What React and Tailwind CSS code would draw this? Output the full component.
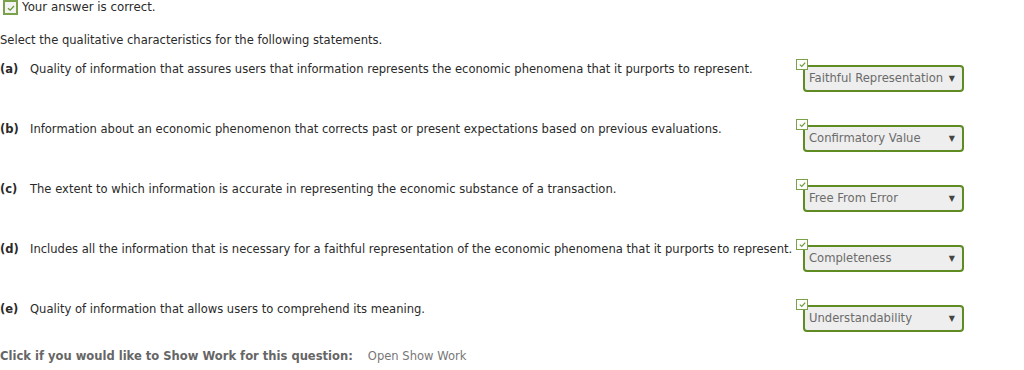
import React from "react";

const rows = [
  {
    label: "(a)",
    text: "Quality of information that assures users that information represents the economic phenomena that it purports to represent.",
    answer: "Faithful Representation",
  },
  {
    label: "(b)",
    text: "Information about an economic phenomenon that corrects past or present expectations based on previous evaluations.",
    answer: "Confirmatory Value",
  },
  {
    label: "(c)",
    text: "The extent to which information is accurate in representing the economic substance of a transaction.",
    answer: "Free From Error",
  },
  {
    label: "(d)",
    text: "Includes all the information that is necessary for a faithful representation of the economic phenomena that it purports to represent.",
    answer: "Completeness",
  },
  {
    label: "(e)",
    text: "Quality of information that allows users to comprehend its meaning.",
    answer: "Understandability",
  },
];

function Tick({ className }) {
  return (
    <svg viewBox="0 0 10 10" className={className}>
      <path d="M2 5.2 L4.2 7.2 L8 3" fill="none" stroke="#6a9a3a" strokeWidth="1.3" />
    </svg>
  );
}

function Dropdown({ value }) {
  return (
    <div className="relative w-[168px] h-[60px] shrink-0">
      <div className="absolute left-[1px] top-[3px] w-[12px] h-[11px] border border-[#7aa24a] bg-white flex items-center justify-center z-10">
        <Tick className="w-[9px] h-[9px]" />
      </div>
      <div className="mt-[9px] ml-[8px] w-[161px] h-[27px] border-2 border-[#5f8c22] rounded-[4px] bg-[#eeeeee] flex items-center justify-between pl-[4px] pr-[7px] pt-[1px] text-[11.6px] text-[#6b6b6b] whitespace-nowrap">
        <span>{value}</span>
        <span className="text-[8px] text-[#444]">▼</span>
      </div>
    </div>
  );
}

export default function App() {
  return (
    <div className="w-[1024px] h-[370px] bg-white text-[#2a2a2a] text-[11.56px] overflow-hidden" style={{ fontFamily: "'DejaVu Sans', Verdana, sans-serif" }}>
      <div className="flex items-center h-[15px] pl-[3px] gap-[4px]">
        <div className="w-[15px] h-[15px] border-2 border-[#7aa24a] bg-[#f4f4f4] flex items-center justify-center">
          <Tick className="w-[10px] h-[10px]" />
        </div>
        <span className="leading-[15px] text-[11.8px]">Your answer is correct.</span>
      </div>

      <p className="mt-[18px] leading-[14px]">Select the qualitative characteristics for the following statements.</p>

      <div className="mt-[9px]">
        {rows.map((r) => (
          <div key={r.label} className="flex h-[60px]">
            <div className="w-[795px] shrink-0 pt-[6px] leading-[14px] flex whitespace-nowrap">
              <span className="font-bold w-[30px] shrink-0">{r.label}</span>
              <span>{r.text}</span>
            </div>
            <Dropdown value={r.answer} />
          </div>
        ))}
      </div>

      <div className="-mt-[7px] flex leading-[14px] text-[#666]">
        <span className="font-bold">Click if you would like to Show Work for this question:</span>
        <span className="ml-[15px] text-[#777]">Open Show Work</span>
      </div>
    </div>
  );
}
